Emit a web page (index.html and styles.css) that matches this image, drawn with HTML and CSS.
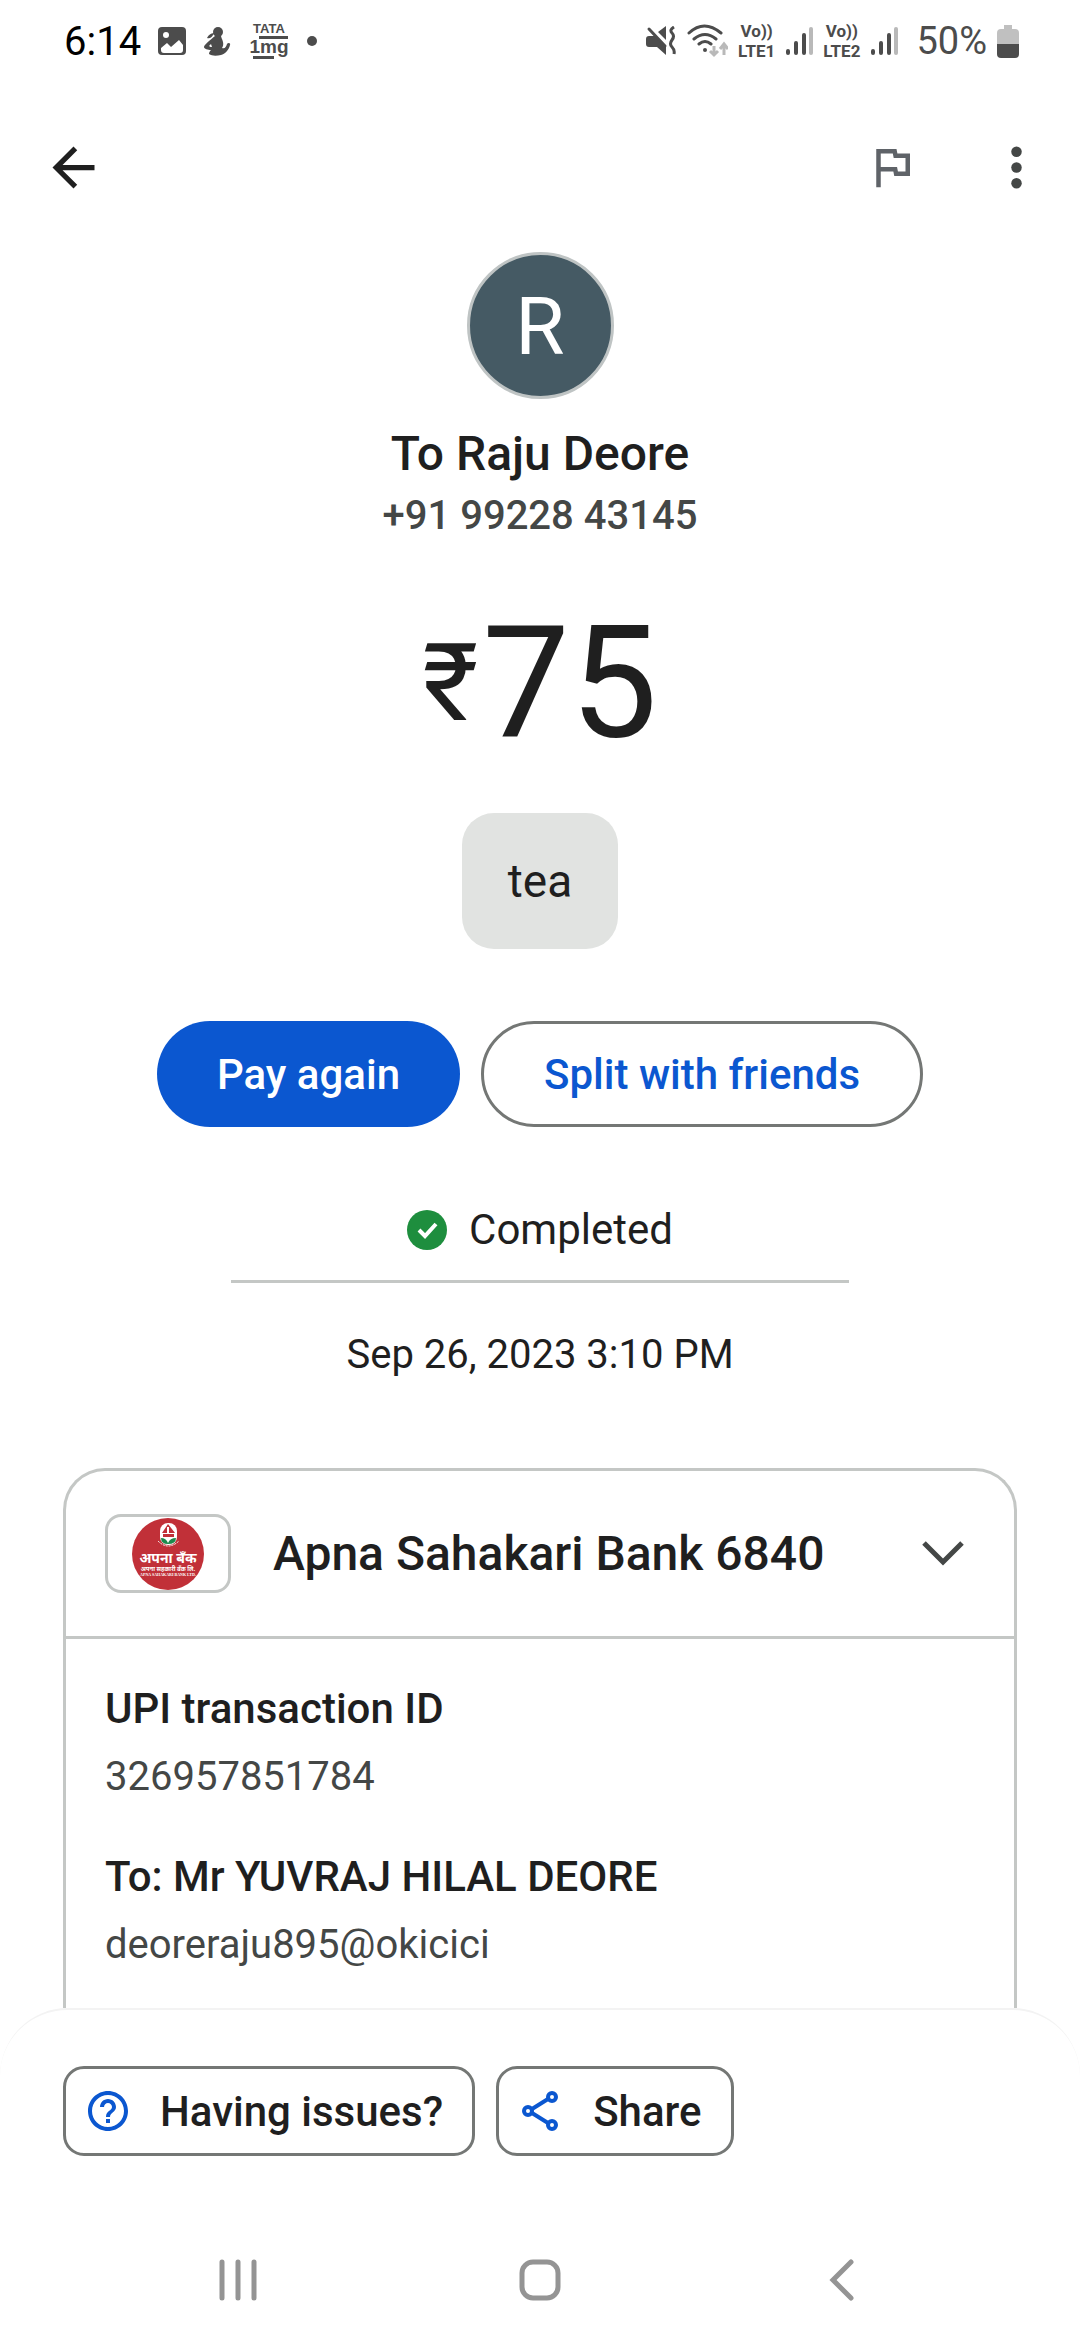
FILE: index.html
```html
<!DOCTYPE html>
<html lang="en">
<head>
    <meta charset="UTF-8">
    <meta name="viewport" content="width=device-width, initial-scale=1.0">
    <title>Transaction details</title>
    <link rel="stylesheet" href="styles.css">
</head>
<body>
    <div class="status-bar">
        <div class="status-left">
            <span class="clock">6:14</span>
            <svg viewBox="0 0 30 30" width="30" height="30">
                <rect x="1" y="1" width="28" height="28" rx="4" fill="#4c4c4c"/>
                <circle cx="9" cy="9" r="3" fill="#fff"/>
                <path d="M4 22l6-5 4 4 8-7 4 5v5q0 3-3 3H7q-3 0-3-3z" fill="#fff"/>
            </svg>
            <svg viewBox="0 0 28 30" width="28" height="30">
                <circle cx="15" cy="6" r="5" fill="#4c4c4c"/>
                <path d="M12 7c-3 0-6 1-8 5 3 1 5-1 6-3z" fill="#4c4c4c"/>
                <path fill-rule="evenodd" d="M12 10h6c1 4 3 6 2 10l-1 2c3 1 4-1 5-4 1-2 4-1 3 1-1 5-5 9-9 10-5 1-9 1-12-1 0-2 1-3 2-4-3 0-7-1-7-3s6-7 11-11zM6 20c1 1 2 1 3 1l-1-3z" fill="#4c4c4c"/>
            </svg>
            <svg viewBox="-3 -6 44 48" width="44" height="48">
                <text x="19" y="10" class="brand-top">TATA</text>
                <rect x="9" y="13" width="29" height="3" fill="#4c4c4c"/>
                <text x="19" y="30" class="brand-main">1mg</text>
                <rect x="3" y="33" width="21" height="3" fill="#4c4c4c"/>
            </svg>
            <span class="more-dot"></span>
        </div>
        <div class="status-right">
            <svg viewBox="0 0 30 30" width="30" height="30">
                <path d="M0 13q0-3 3-3h6l11 10v9l-9-8H3q-3 0-3-3zM12 6l8-6v14z" fill="#4c4c4c"/>
                <path d="M3 3l16 17" stroke="#4c4c4c" stroke-width="3" stroke-linecap="round"/>
                <path d="M28 1q-5 3-2 6t0 7 0 7 2 7" fill="none" stroke="#4c4c4c" stroke-width="3"/>
            </svg>
            <svg viewBox="0 0 42 34" width="42" height="34">
                <g fill="none" stroke="#4c4c4c" stroke-width="3" stroke-linecap="round">
                    <path d="M3 9q15-14 32 0M8 15q11-9 22 0M13 20q6-5 12 0"/>
                </g>
                <circle cx="19" cy="26" r="2" fill="#4c4c4c"/>
                <path d="M28 22v9M24 27l4 4 4-4M38 31V20M34 25l4-5 4 5" fill="none" stroke="#b9b9b9" stroke-width="3"/>
            </svg>
            <span class="volte"><span>Vo))</span><span>LTE1</span></span>
            <svg viewBox="0 0 28 30" width="28" height="30">
                <g stroke-width="4" stroke-linecap="round" stroke="#4c4c4c">
                    <path d="M3 25v2M11 17v10M19 9v18"/>
                    <path d="M26 3v24" stroke="#b9b9b9"/>
                </g>
            </svg>
            <span class="volte"><span>Vo))</span><span>LTE2</span></span>
            <svg viewBox="0 0 28 30" width="28" height="30">
                <g stroke-width="4" stroke-linecap="round" stroke="#4c4c4c">
                    <path d="M3 25v2M11 17v10M19 9v18"/>
                    <path d="M26 3v24" stroke="#b9b9b9"/>
                </g>
            </svg>
            <span class="battery-level">50%</span>
            <svg viewBox="0 0 22 33" width="22" height="33">
                <path d="M7 0h8v4h3q4 0 4 4v11H0V8q0-4 4-4h3z" fill="#c0c0c0"/>
                <path d="M0 19h22v10q0 4-4 4H4q-4 0-4-4z" fill="#4c4c4c"/>
            </svg>
        </div>
    </div>

    <header class="app-bar">
        <button type="button" aria-label="Back">
            <svg viewBox="0 0 24 24" width="63" height="63"><path d="M20 11H7.83l5.59-5.59L12 4l-8 8 8 8 1.41-1.41L7.83 13H20z" fill="#1f1f1f"/></svg>
        </button>
        <div class="app-actions">
            <button type="button" aria-label="Report">
                <svg viewBox="0 0 24 24" width="54" height="54"><path d="M12.36 6l.4 2H18v6h-3.360l-.4-2H7V6h5.360M14 4H5v17h2v-7h5.600l.4 2h7V6h-5.600z" fill="#5f6368"/></svg>
            </button>
            <button type="button" aria-label="More options">
                <svg viewBox="0 0 24 24" width="63" height="63"><g fill="#444746"><circle cx="12" cy="6" r="2"/><circle cx="12" cy="12" r="2"/><circle cx="12" cy="18" r="2"/></g></svg>
            </button>
        </div>
    </header>

    <main class="content">
        <div class="avatar">R</div>
        <h1 class="payee">To Raju Deore</h1>
        <p class="phone">+91 99228 43145</p>
        <p class="amount"><span class="currency">₹</span>75</p>
        <p class="note">tea</p>

        <div class="actions">
            <button type="button" class="pill pill-primary">Pay again</button>
            <button type="button" class="pill pill-outline">Split with friends</button>
        </div>

        <div class="status">
            <svg viewBox="0 0 40 40" width="40" height="40">
                <circle cx="20" cy="20" r="20" fill="#1e8e3e"/>
                <path d="M12 20l6 6 11-12" fill="none" stroke="#fff" stroke-width="4"/>
            </svg>
            <span>Completed</span>
        </div>
        <p class="date">Sep 26, 2023 3:10 PM</p>

        <section class="card">
            <button type="button" class="bank-row">
                <span class="bank-logo">
                    <svg viewBox="0 0 72 72" width="72" height="72">
                        <circle cx="36" cy="36" r="36" fill="#c13038"/>
                        <rect x="28" y="5" width="17" height="22" rx="8" fill="#fff"/>
                        <path d="M36 6l-6 9h5v-6h2v6h6zM31 16h11v3H31z" fill="#c13038"/>
                        <path d="M36 26q-7 0-7-6 5 0 7 5 2-5 8-5 0 6-8 6z" fill="#1d8a4c"/>
                        <path d="M26 23q10 10 21 0" fill="none" stroke="#fff" stroke-width="1" stroke-dasharray="2 1"/>
                        <text x="36" y="45" class="logo-name">अपना बॅंक</text>
                        <text x="36" y="53" class="logo-sub">अपना सहकारी बँक लि.</text>
                        <text x="36" y="58" class="logo-latin">APNA SAHAKARI BANK LTD.</text>
                    </svg>
                </span>
                <span class="bank-name">Apna Sahakari Bank 6840</span>
                <svg viewBox="0 0 42 26" width="42" height="26"><path d="M2 2l19 19L40 2" fill="none" stroke="#444746" stroke-width="5"/></svg>
            </button>
            <dl class="details">
                <dt>UPI transaction ID</dt>
                <dd>326957851784</dd>
                <dt>To: Mr YUVRAJ HILAL DEORE</dt>
                <dd>deoreraju895@okicici</dd>
            </dl>
        </section>
    </main>

    <footer class="sheet">
        <button type="button" class="chip">
            <svg viewBox="0 0 24 24" width="48" height="48"><path d="M11 18h2v-2h-2zm1-16C6.480 2 2 6.480 2 12s4.480 10 10 10 10-4.480 10-10S17.520 2 12 2zm0 18c-4.410 0-8-3.590-8-8s3.590-8 8-8 8 3.590 8 8-3.590 8-8 8zm0-14c-2.210 0-4 1.790-4 4h2c0-1.100.9-2 2-2s2 .9 2 2c0 2-3 1.750-3 5h2c0-2.250 3-2.500 3-5 0-2.210-1.790-4-4-4z" fill="#0b57d0"/></svg>
            Having issues?
        </button>
        <button type="button" class="chip">
            <svg viewBox="0 0 48 48" width="48" height="48"><g fill="none" stroke="#0b57d0" stroke-width="4"><circle cx="11" cy="24" r="4"/><circle cx="35" cy="10" r="4"/><circle cx="35" cy="38" r="4"/><path d="M15 22l16-10M15 26l16 10"/></g></svg>
            Share
        </button>
    </footer>

    <nav class="nav-bar">
        <button type="button" aria-label="Recent apps">
            <svg viewBox="0 0 42 42" width="42" height="42"><path d="M5 3v36M21 3v36M37 3v36" stroke="#949494" stroke-width="5" stroke-linecap="round"/></svg>
        </button>
        <button type="button" aria-label="Home">
            <svg viewBox="0 0 42 42" width="42" height="42"><rect x="3" y="3" width="36" height="36" rx="11" fill="none" stroke="#949494" stroke-width="5"/></svg>
        </button>
        <button type="button" aria-label="Back">
            <svg viewBox="0 0 42 42" width="42" height="42"><path d="M30 3L12 21l18 18" fill="none" stroke="#949494" stroke-width="5" stroke-linecap="round"/></svg>
        </button>
    </nav>
</body>
</html>
```
FILE: styles.css
```css
* {
    box-sizing: border-box;
}
body {
    margin: 0;
    height: 100vh;
    display: flex;
    flex-direction: column;
    background-color: #fff;
    color: #1f1f1f;
    font-family: Roboto, sans-serif;
    font-size: 42px;
}
button {
    font-family: inherit;
    font-size: inherit;
    color: inherit;
    background: none;
    border: none;
    padding: 0;
    cursor: pointer;
}
svg {
    display: block;
    flex-shrink: 0;
}
h1, p, dl, dd {
    margin: 0;
}

/* Status bar */
.status-bar {
    display: flex;
    justify-content: space-between;
    align-items: center;
    height: 82px;
    padding: 0 61px 0 64px;
    color: #4c4c4c;
}
.status-left, .status-right {
    display: flex;
    align-items: center;
}
.status-left {
    gap: 16px;
}
.status-right {
    gap: 10px;
}
.clock {
    color: #000;
    font-size: 40px;
}
.brand-top, .brand-main {
    font-family: "Liberation Sans", sans-serif;
    font-weight: 700;
    text-anchor: middle;
    fill: #4c4c4c;
}
.brand-top {
    font-size: 13px;
}
.brand-main {
    font-size: 19px;
}
.more-dot {
    width: 10px;
    height: 10px;
    border-radius: 50%;
    background-color: #4c4c4c;
}
.volte {
    display: flex;
    flex-direction: column;
    align-items: center;
    font-size: 17px;
    line-height: 20px;
    font-weight: 700;
}
.battery-level {
    margin-left: 8px;
    font-size: 38px;
}

/* App bar */
.app-bar {
    display: flex;
    justify-content: space-between;
    align-items: center;
    height: 170px;
    padding: 0 32px 0 42px;
}
.app-actions {
    display: flex;
    align-items: center;
    gap: 66px;
}

/* Payment summary */
.content {
    flex: 1;
    min-height: 0;
    overflow: hidden;
    display: flex;
    flex-direction: column;
    align-items: center;
}
.avatar {
    flex-shrink: 0;
    width: 147px;
    height: 147px;
    border: 3px solid #bfc4c4;
    border-radius: 50%;
    background-color: #455a64;
    color: #fff;
    font-size: 80px;
    line-height: 144px;
    text-align: center;
}
.payee {
    margin-top: 24px;
    font-size: 48px;
    line-height: 62px;
    font-weight: 500;
}
.phone {
    font-size: 40px;
    line-height: 62px;
    font-weight: 500;
    color: #444746;
}
.amount {
    display: flex;
    align-items: center;
    gap: 4px;
    margin-top: 42px;
    font-size: 156px;
    line-height: 188px;
}
.currency {
    font-size: 108px;
}
.note {
    margin-top: 36px;
    padding: 38px 46px;
    border-radius: 32px;
    background-color: #e1e3e1;
    font-size: 46px;
    line-height: 60px;
}
.actions {
    display: flex;
    gap: 21px;
    margin-top: 72px;
}
.pill {
    height: 106px;
    padding: 0 60px;
    border-radius: 53px;
    font-weight: 500;
}
.pill-primary {
    background-color: #0b57d0;
    color: #fff;
}
.pill-outline {
    border: 3px solid #747775;
    color: #0b57d0;
}
.status {
    display: flex;
    justify-content: center;
    align-items: center;
    gap: 22px;
    width: 618px;
    margin-top: 73px;
    padding-bottom: 20px;
    border-bottom: 3px solid #c4c7c5;
    line-height: 60px;
}
.date {
    margin-top: 42px;
    font-size: 40px;
    line-height: 60px;
}

/* Bank card */
.card {
    flex: 1 0 auto;
    align-self: stretch;
    margin: 83px 63px 0;
    border: 3px solid #c4c7c5;
    border-bottom: none;
    border-radius: 42px 42px 0 0;
}
.bank-row {
    display: flex;
    align-items: center;
    width: 100%;
    height: 168px;
    padding: 0 50px 0 39px;
    border-bottom: 3px solid #c4c7c5;
    text-align: left;
}
.bank-logo {
    display: flex;
    justify-content: center;
    align-items: center;
    width: 126px;
    height: 79px;
    border: 3px solid #c4c7c5;
    border-radius: 16px;
}
.bank-name {
    flex: 1;
    margin-left: 42px;
    font-size: 48px;
    font-weight: 500;
}
.logo-name, .logo-sub, .logo-latin {
    font-family: "Noto Sans", "Noto Sans Devanagari", sans-serif;
    font-weight: 700;
    text-anchor: middle;
    fill: #fff;
}
.logo-name {
    font-size: 14px;
}
.logo-sub {
    font-size: 6px;
}
.logo-latin {
    font-family: "Liberation Serif", serif;
    font-size: 4px;
}
.details {
    padding: 40px 39px;
    line-height: 60px;
}
.details dt {
    font-weight: 500;
}
.details dd {
    margin: 8px 0 40px;
    font-size: 40px;
    color: #444746;
}

/* Bottom sheet */
.sheet {
    display: flex;
    gap: 21px;
    height: 212px;
    padding: 56px 63px 0;
    border-top: 2px solid #f3f3f3;
    border-radius: 68px 68px 0 0;
    background-color: #fff;
}
.chip {
    display: flex;
    align-items: center;
    gap: 28px;
    height: 90px;
    padding: 0 29px 0 18px;
    border: 3px solid #747775;
    border-radius: 21px;
    font-weight: 500;
}

/* System navigation */
.nav-bar {
    display: flex;
    justify-content: space-between;
    align-items: center;
    height: 120px;
    padding: 0 217px;
}
```
